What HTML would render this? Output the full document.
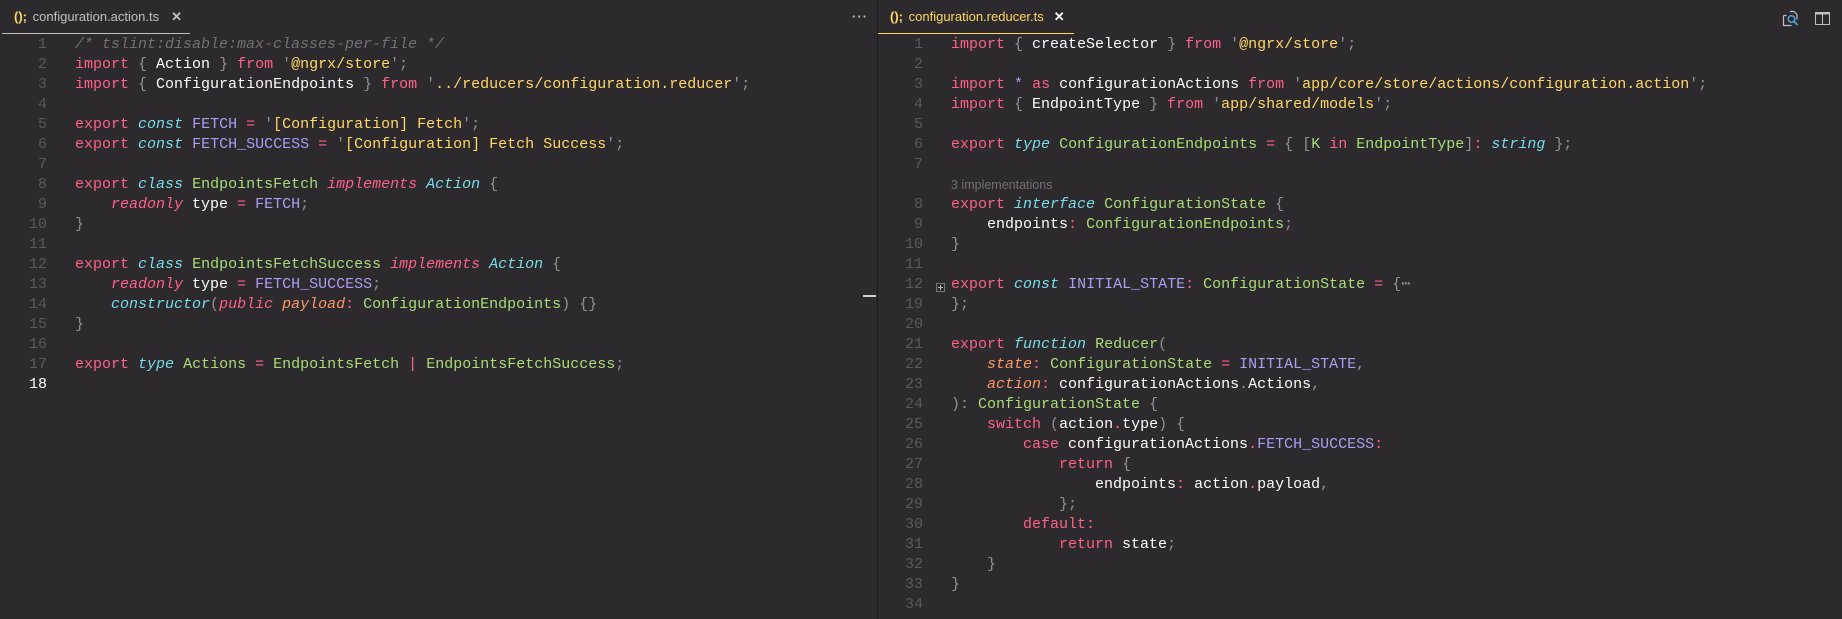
<!DOCTYPE html>
<html><head><meta charset="utf-8"><style>
html,body{margin:0;padding:0;background:#2d2a2e;width:1842px;height:619px;overflow:hidden;position:relative}
.code{position:absolute;font-family:"Liberation Mono",monospace;font-size:15px;line-height:20px;white-space:pre;color:#fcfcfa}
.ln{position:absolute;font-family:"Liberation Mono",monospace;font-size:15px;line-height:20px;color:#5b595c;text-align:right;width:30px;white-space:pre}
.k{color:#ff6188}.s{color:#ffd866}.i{color:#78dce8;font-style:italic}.ki{color:#ff6188;font-style:italic}
.c{color:#ab9df2}.g{color:#a9dc76}.p{color:#939293}.o{color:#fc9867;font-style:italic}.cm{color:#727072;font-style:italic}
.tab{position:absolute;top:0;height:34px;font-family:"Liberation Sans",sans-serif;font-size:13px;line-height:34px;white-space:nowrap}
.lens{position:absolute;font-family:"Liberation Sans",sans-serif;font-size:12.5px;color:#727072;line-height:20px}
</style></head><body>
<div style="position:absolute;left:877px;top:0;width:1px;height:619px;background:#221f22"></div>
<div class="tab" style="left:14px;color:#c1c0c0"><span style="color:#ffd866;font-weight:bold">();</span> <span style="margin-left:2px">configuration.action.ts</span><span style="margin-left:12px;color:#c1c0c0;font-weight:bold">✕</span></div>
<div style="position:absolute;left:2px;top:33px;width:188px;height:1px;background:#c1c0c0"></div>
<div class="tab" style="left:852px;color:#c1c0c0;font-weight:bold;letter-spacing:1px">···</div>
<div class="tab" style="left:890px;color:#ffd866"><span style="font-weight:bold">();</span> <span style="margin-left:2px">configuration.reducer.ts</span><span style="margin-left:10px;color:#fcfcfa;font-weight:bold">✕</span></div>
<div style="position:absolute;left:878px;top:33px;width:196px;height:1px;background:#ffd866"></div>
<svg style="position:absolute;left:1782px;top:10px" width="18" height="17" viewBox="0 0 18 17"><path d="M1.5 5.5h3M1.5 5.5v10h8M8 1.5h4l3 3v5" fill="none" stroke="#c1c0c0" stroke-width="1.2"/><circle cx="9.5" cy="9" r="3.3" fill="none" stroke="#4fa3e0" stroke-width="1.5"/><path d="M12 11.5l3.5 3.5" stroke="#4fa3e0" stroke-width="1.8"/></svg>
<svg style="position:absolute;left:1815px;top:12px" width="15" height="13" viewBox="0 0 15 13"><rect x="0.5" y="0.5" width="14" height="12" fill="none" stroke="#c1c0c0"/><rect x="0.5" y="0.5" width="14" height="2" fill="#c1c0c0"/><path d="M7.5 0.5v12" stroke="#c1c0c0"/></svg>
<div style="position:absolute;left:863px;top:295px;width:13px;height:2px;background:#d0d0d0"></div>
<div style="position:absolute;left:936px;top:283px;width:9px;height:9px;border:1px solid #777;box-sizing:border-box"></div>
<div style="position:absolute;left:938px;top:287px;width:5px;height:1px;background:#bbb"></div>
<div style="position:absolute;left:940px;top:285px;width:1px;height:5px;background:#bbb"></div>

<div class="ln" style="left:17px;top:35px">1
2
3
4
5
6
7
8
9
10
11
12
13
14
15
16
17
<span style="color:#fcfcfa">18</span></div>
<div class="code" style="left:75px;top:35px"><span class="cm">/* tslint:disable:max-classes-per-file */</span>
<span class="k">import</span> <span class="p">{</span> Action <span class="p">}</span> <span class="k">from</span> <span class="p">'</span><span class="s">@ngrx/store</span><span class="p">';</span>
<span class="k">import</span> <span class="p">{</span> ConfigurationEndpoints <span class="p">}</span> <span class="k">from</span> <span class="p">'</span><span class="s">../reducers/configuration.reducer</span><span class="p">';</span>

<span class="k">export</span> <span class="i">const</span> <span class="c">FETCH</span> <span class="k">=</span> <span class="p">'</span><span class="s">[Configuration] Fetch</span><span class="p">';</span>
<span class="k">export</span> <span class="i">const</span> <span class="c">FETCH_SUCCESS</span> <span class="k">=</span> <span class="p">'</span><span class="s">[Configuration] Fetch Success</span><span class="p">';</span>

<span class="k">export</span> <span class="i">class</span> <span class="g">EndpointsFetch</span> <span class="ki">implements</span> <span class="i">Action</span> <span class="p">{</span>
    <span class="ki">readonly</span> type <span class="k">=</span> <span class="c">FETCH</span><span class="p">;</span>
<span class="p">}</span>

<span class="k">export</span> <span class="i">class</span> <span class="g">EndpointsFetchSuccess</span> <span class="ki">implements</span> <span class="i">Action</span> <span class="p">{</span>
    <span class="ki">readonly</span> type <span class="k">=</span> <span class="c">FETCH_SUCCESS</span><span class="p">;</span>
    <span class="i">constructor</span><span class="p">(</span><span class="ki">public</span> <span class="o">payload</span><span class="k">:</span> <span class="g">ConfigurationEndpoints</span><span class="p">)</span> <span class="p">{}</span>
<span class="p">}</span>

<span class="k">export</span> <span class="i">type</span> <span class="g">Actions</span> <span class="k">=</span> <span class="g">EndpointsFetch</span> <span class="k">|</span> <span class="g">EndpointsFetchSuccess</span><span class="p">;</span>
</div>

<div class="ln" style="left:893px;top:35px">1
2
3
4
5
6
7

8
9
10
11
12
19
20
21
22
23
24
25
26
27
28
29
30
31
32
33
34</div>
<div class="lens" style="left:951px;top:175px">3 implementations</div>
<div class="code" style="left:951px;top:35px"><span class="k">import</span> <span class="p">{</span> createSelector <span class="p">}</span> <span class="k">from</span> <span class="p">'</span><span class="s">@ngrx/store</span><span class="p">';</span>

<span class="k">import</span> <span class="c">*</span> <span class="k">as</span> configurationActions <span class="k">from</span> <span class="p">'</span><span class="s">app/core/store/actions/configuration.action</span><span class="p">';</span>
<span class="k">import</span> <span class="p">{</span> EndpointType <span class="p">}</span> <span class="k">from</span> <span class="p">'</span><span class="s">app/shared/models</span><span class="p">';</span>

<span class="k">export</span> <span class="i">type</span> <span class="g">ConfigurationEndpoints</span> <span class="k">=</span> <span class="p">{</span> <span class="p">[</span><span class="g">K</span> <span class="k">in</span> <span class="g">EndpointType</span><span class="p">]</span><span class="k">:</span> <span class="i">string</span> <span class="p">};</span>


<span class="k">export</span> <span class="i">interface</span> <span class="g">ConfigurationState</span> <span class="p">{</span>
    endpoints<span class="k">:</span> <span class="g">ConfigurationEndpoints</span><span class="p">;</span>
<span class="p">}</span>

<span class="k">export</span> <span class="i">const</span> <span class="c">INITIAL_STATE</span><span class="k">:</span> <span class="g">ConfigurationState</span> <span class="k">=</span> <span class="p">{⋯</span>
<span class="p">};</span>

<span class="k">export</span> <span class="i">function</span> <span class="g">Reducer</span><span class="p">(</span>
    <span class="o">state</span><span class="k">:</span> <span class="g">ConfigurationState</span> <span class="k">=</span> <span class="c">INITIAL_STATE</span><span class="p">,</span>
    <span class="o">action</span><span class="k">:</span> configurationActions<span class="p">.</span>Actions<span class="p">,</span>
<span class="p">):</span> <span class="g">ConfigurationState</span> <span class="p">{</span>
    <span class="k">switch</span> <span class="p">(</span>action<span class="k">.</span>type<span class="p">)</span> <span class="p">{</span>
        <span class="k">case</span> configurationActions<span class="k">.</span><span class="c">FETCH_SUCCESS</span><span class="k">:</span>
            <span class="k">return</span> <span class="p">{</span>
                endpoints<span class="k">:</span> action<span class="k">.</span>payload<span class="p">,</span>
            <span class="p">};</span>
        <span class="k">default</span><span class="k">:</span>
            <span class="k">return</span> state<span class="p">;</span>
    <span class="p">}</span>
<span class="p">}</span>
</div>
</body></html>
